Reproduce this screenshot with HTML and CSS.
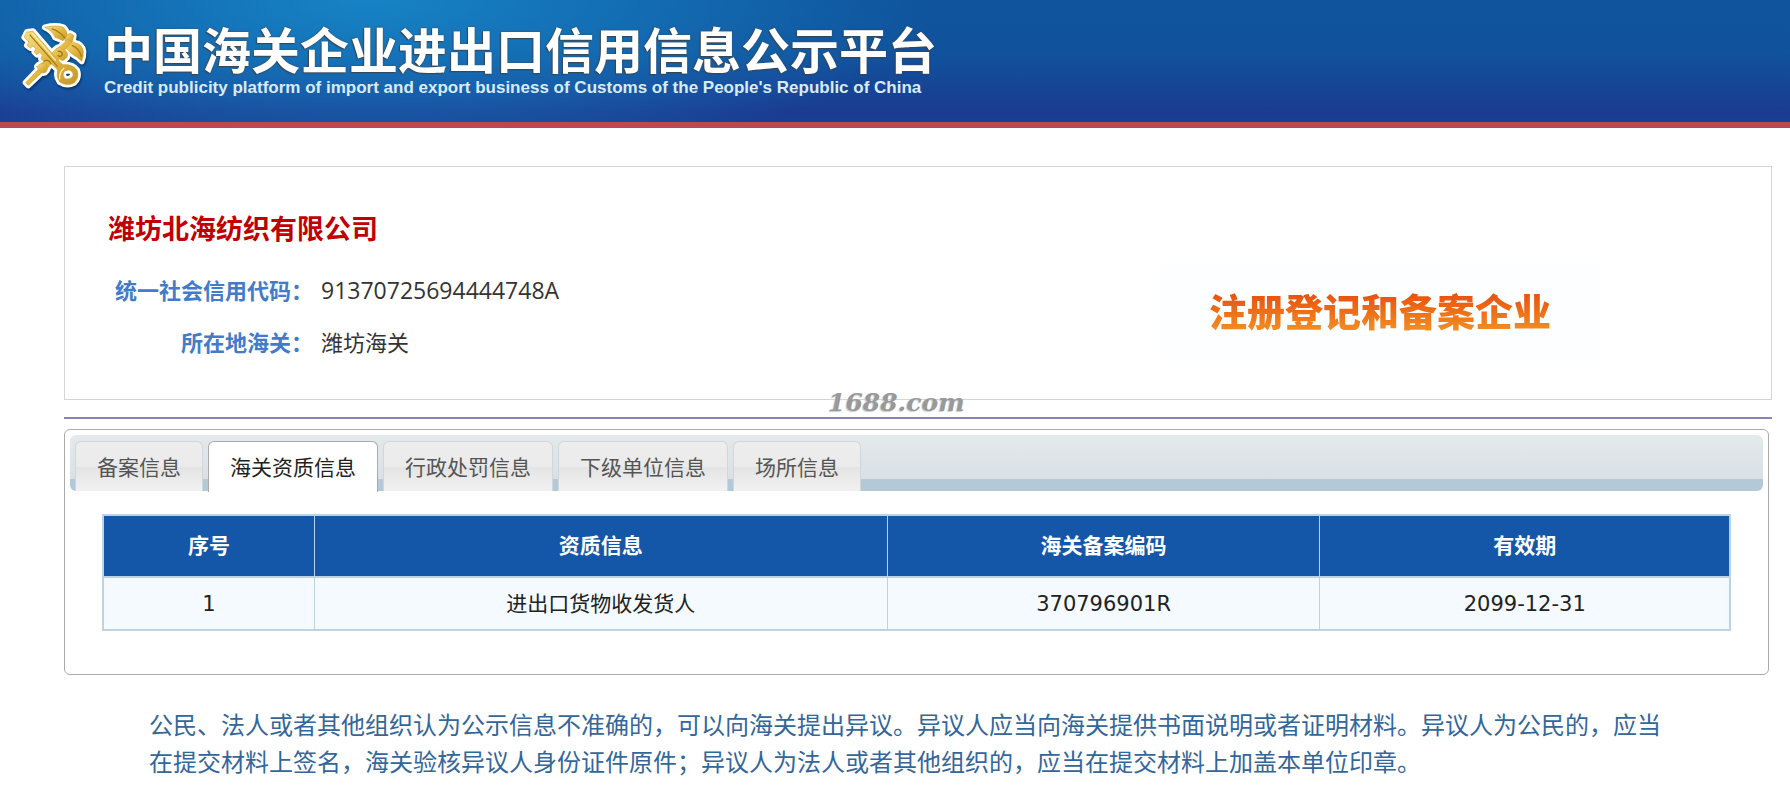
FILE: index.html
```
<!DOCTYPE html>
<html lang="zh-CN">
  <head>
    <meta charset="UTF-8" />
    <title>中国海关企业进出口信用信息公示平台</title>
    <link rel="stylesheet" href="styles.css">
  </head>
  <body>
    <header class="header">
      <svg class="emblem" viewBox="30 21 210 210" aria-hidden="true">
        <defs>
          <linearGradient id="gold" x1="0" y1="0" x2="1" y2="1">
            <stop offset="0" stop-color="#f6dd85" />
            <stop offset="0.5" stop-color="#e3b942" />
            <stop offset="1" stop-color="#c59726" />
          </linearGradient>
          <g id="emblemShape" stroke-linejoin="round" stroke-linecap="round">
            <!-- 双翼 -->
            <path d="M108 40 Q140 32 163 40 Q174 50 176 66 L162 80 Q150 74 138 70 Q132 52 108 40 Z" />
            <path d="M186 78 L196 86 Q220 90 223 112 Q224 128 218 142 Q206 128 192 122 Q180 112 168 100 Z" />
            <path d="M168 80 Q170 62 184 58 L194 64 Q194 80 182 90 Z" />
            <!-- 蛇杖 -->
            <path d="M178 76 L188 86 L112 166 L98 176 L58 214 L50 206 L88 166 L96 150 Z" />
            <path d="M84 158 Q96 142 112 152 Q120 166 108 176 Q92 180 84 158 Z" />
            <path d="M134 112 Q148 92 162 106 Q180 112 174 130 Q162 146 150 134 L144 146 L120 128 Z" />
            <!-- 钥匙 -->
            <path d="M54 54 L72 52 L148 140 L162 152 Q190 150 204 168 Q212 190 196 206 Q174 218 152 204 Q140 188 146 168 L134 156 L112 134 L104 142 L96 134 L100 124 L92 114 L84 122 L76 114 L80 104 L72 96 L64 102 L54 94 L60 84 L46 70 Z M166 172 Q158 184 168 194 Q184 198 192 186 Q194 172 180 168 Z" fill-rule="evenodd" />
          </g>
        </defs>
        <use href="#emblemShape" class="emblem-edge" />
        <use href="#emblemShape" class="emblem-gold" />
        <g class="emblem-line">
          <path d="M62 62 L146 158" />
          <path d="M128 44 Q152 52 168 72" />
          <path d="M188 94 Q208 100 218 128" />
          <path d="M146 112 Q160 110 160 122 Q154 132 146 124" />
          <path d="M104 142 Q120 134 126 150" />
        </g>
        <path class="emblem-shine" d="M70 58 L140 140 M152 196 Q150 174 166 162" />
      </svg>
      <div>
        <h1>中国海关企业进出口信用信息公示平台</h1>
        <p>Credit publicity platform of import and export business of Customs of the People's Republic of China</p>
      </div>
    </header>

    <main class="container">
      <section class="company">
        <div>
          <h2>潍坊北海纺织有限公司</h2>
          <dl class="company-info">
            <dt>统一社会信用代码：</dt>
            <dd class="code">91370725694444748A</dd>
            <dt>所在地海关：</dt>
            <dd>潍坊海关</dd>
          </dl>
        </div>
        <div class="badge"><span>注册登记和备案企业</span></div>
        <span class="watermark">1688.com</span>
      </section>

      <section class="tabs">
        <nav class="tab-nav" role="tablist">
          <button type="button" role="tab">备案信息</button>
          <button type="button" role="tab" class="active" aria-selected="true">海关资质信息</button>
          <button type="button" role="tab">行政处罚信息</button>
          <button type="button" role="tab">下级单位信息</button>
          <button type="button" role="tab">场所信息</button>
        </nav>

        <table class="data-table">
          <colgroup>
            <col class="col-index" />
            <col class="col-type" />
            <col class="col-code" />
            <col class="col-date" />
          </colgroup>
          <thead>
            <tr>
              <th>序号</th>
              <th>资质信息</th>
              <th>海关备案编码</th>
              <th>有效期</th>
            </tr>
          </thead>
          <tbody>
            <tr>
              <td>1</td>
              <td>进出口货物收发货人</td>
              <td>370796901R</td>
              <td>2099-12-31</td>
            </tr>
          </tbody>
        </table>
      </section>

      <p class="notice">公民、法人或者其他组织认为公示信息不准确的，可以向海关提出异议。异议人应当向海关提供书面说明或者证明材料。异议人为公民的，应当在提交材料上签名，海关验核异议人身份证件原件；异议人为法人或者其他组织的，应当在提交材料上加盖本单位印章。</p>
    </main>
  </body>
</html>
```
FILE: styles.css
```
* {
  box-sizing: border-box;
  margin: 0;
  padding: 0;
}

body {
  background-color: #fff;
  color: #333;
  font-family: "Open Sans", "Noto Sans CJK SC", sans-serif;
}

.header {
  display: flex;
  align-items: flex-start;
  gap: 15px;
  height: 128px;
  padding: 21px 19px 0;
  border-bottom: 6px solid #bb494e;
  background:
    radial-gradient(ellipse 560px 170px at 370px 0, #1783c6, rgba(23, 131, 198, 0)),
    linear-gradient(#0f549d 0%, #10539c 42%, #1b3b91 93%, #173f93 100%);
  color: #fff;
}

.emblem {
  width: 70px;
  height: 70px;
  filter: drop-shadow(1px 2px 1px rgba(0, 20, 60, 0.5));
}

.emblem-edge {
  fill: #fff;
  stroke: #fff;
  stroke-width: 18;
}

.emblem-gold {
  fill: url(#gold);
  stroke: #d0a435;
  stroke-width: 2;
}

.emblem-line {
  fill: none;
  stroke: #a67c1a;
  stroke-width: 4;
}

.emblem-shine {
  fill: none;
  stroke: #fbeeb0;
  stroke-width: 4;
}

.header h1 {
  font-size: 49px;
  line-height: 59px;
  font-weight: bold;
  text-shadow: -1px 1px 1px #3c4450, 0 0 2px #3c4450;
}

.header p {
  font-family: "Liberation Sans", sans-serif;
  font-size: 17px;
  line-height: 16px;
  font-weight: bold;
  color: #d9ebfb;
}

.container {
  padding: 38px 18px 0 64px;
}

.company {
  position: relative;
  display: flex;
  justify-content: space-between;
  align-items: flex-start;
  height: 234px;
  padding: 42px 171px 0 43px;
  border: 1px solid #d5d5d5;
}

.company h2 {
  font-size: 27px;
  line-height: 40px;
  font-weight: bold;
  color: #c00000;
}

.company-info {
  display: grid;
  grid-template-columns: 205px auto;
  column-gap: 8px;
  grid-auto-rows: 52px;
  margin-top: 15px;
  font-size: 22px;
  line-height: 52px;
}

.company-info dt {
  text-align: right;
  font-weight: bold;
  color: #437bcb;
}

.company-info .code {
  font-size: 23px;
}

.badge {
  padding: 25px 49px;
  margin-top: 54px;
  background-color: #fdfeff;
}

.badge span {
  display: block;
  font-size: 38px;
  line-height: 46px;
  font-weight: 900;
  background: linear-gradient(#e9530f 15%, #f28c22 90%);
  -webkit-background-clip: text;
  background-clip: text;
  color: transparent;
}

.watermark {
  position: absolute;
  left: 763px;
  bottom: -19px;
  font: italic bold 25px/30px "DejaVu Serif", serif;
  color: #999;
  text-shadow: -1px 1px 1px #ccc;
}

.tabs {
  position: relative;
  margin: 29px 3px 0 0;
  padding: 5px 5px 43px;
  border: 1px solid #aaa;
  border-radius: 6px;
}

/* 紫色分隔线 */
.tabs::before {
  content: "";
  position: absolute;
  top: -13px;
  left: -1px;
  right: -4px;
  height: 2px;
  background-color: #8f7fb8;
}

.tab-nav {
  display: flex;
  gap: 5px;
  height: 56px;
  padding: 6px 5px 0;
  border-radius: 6px;
  background: linear-gradient(#e4e9eb 0, #d9e1e4 44px, #b4c9d8 44px);
}

.tab-nav button {
  height: 50px;
  padding: 0 21px;
  border: 1px solid #d0d7da;
  border-bottom: none;
  border-radius: 6px 6px 0 0;
  background: linear-gradient(#ededed 0%, #ebebeb 50%, #e4e4e4 51%, #f1f1f1 100%);
  color: #555;
  font-family: inherit;
  font-size: 21px;
  line-height: 48px;
  cursor: pointer;
}

.tab-nav .active {
  height: 51px;
  border-color: #aaa;
  background: #fff;
  color: #212121;
}

.data-table {
  width: calc(100% - 64px);
  margin: 23px 32px 0;
  border-collapse: collapse;
  table-layout: fixed;
  font-family: "DejaVu Sans", "Noto Sans CJK SC", sans-serif;
  font-size: 21px;
  line-height: 30px;
  text-align: center;
  border: 2px solid #bcd3e2;
  color: #222;
}

.col-index {
  width: 13%;
}

.col-type {
  width: 35.2%;
}

.col-code {
  width: 26.6%;
}

.col-date {
  width: 25.2%;
}

.data-table th {
  height: 62px;
  border: 1px solid #b5d3ee;
  background-color: #1457a9;
  color: #fff;
}

.data-table td {
  height: 53px;
  border: 1px solid #bcd3e2;
  border-top-width: 2px;
  background-color: #f4faff;
}

.notice {
  padding: 31px 100px 0 85px;
  font-size: 24px;
  line-height: 37px;
  color: #336699;
}
```
